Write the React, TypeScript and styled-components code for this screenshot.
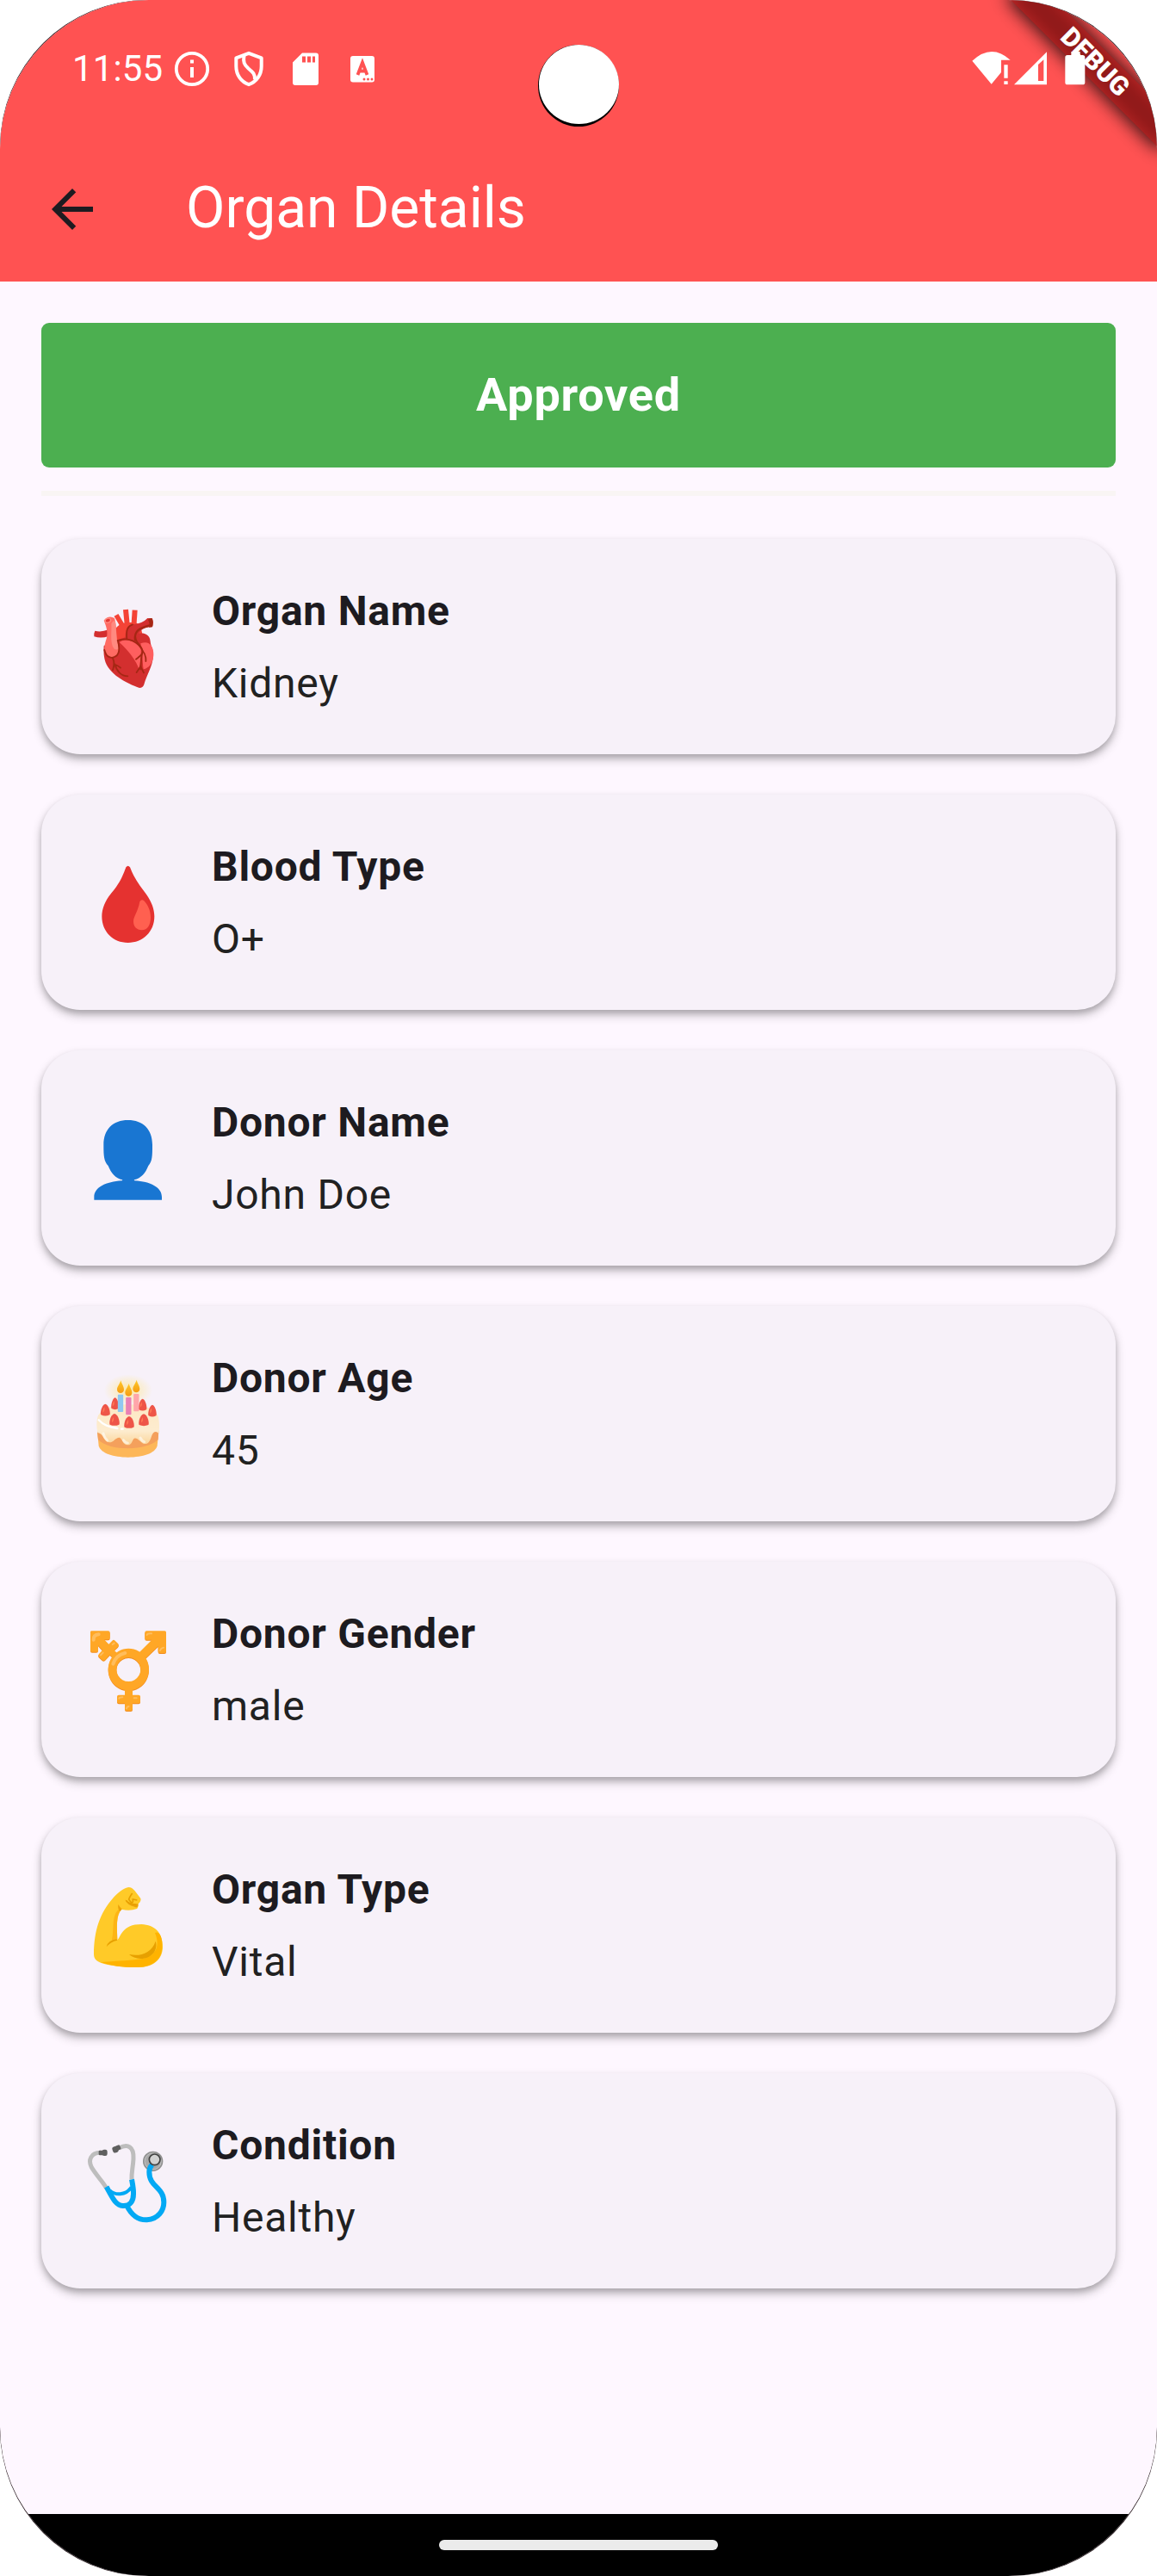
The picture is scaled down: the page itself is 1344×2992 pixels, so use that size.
import React from "react";
import styled, { createGlobalStyle } from "styled-components";

const GlobalStyle = createGlobalStyle`
  * { box-sizing: border-box; }
  body { margin: 0; background: #fff; font-family: Roboto, "Noto Sans", sans-serif; }
  svg { display: block; flex: none; }
`;

const Device = styled.div`
  width: 1344px;
  height: 2992px;
  background: #2a1c20;
  border-radius: 171px;
  overflow: hidden;
`;

const Screen = styled.div`
  position: relative;
  display: flex;
  flex-direction: column;
  width: 100%;
  height: 100%;
  background: #fef7ff;
  border-radius: 173px;
  overflow: hidden;
`;

const Header = styled.header`
  display: flex;
  flex-direction: column;
  height: 327px;
  flex: none;
  background: #ff5252;
`;

const StatusBar = styled.div`
  position: relative;
  z-index: 2;
  display: flex;
  align-items: center;
  justify-content: space-between;
  height: 159px;
  padding: 0 80.7px 0 84px;
`;

const StatusGroup = styled.div`
  display: flex;
  align-items: center;
  gap: 18px;
`;

const Clock = styled.span`
  width: 97px;
  font-size: 42px;
  line-height: 48px;
  letter-spacing: 0.1px;
  color: #fff;
  white-space: nowrap;
`;

const Camera = styled.div`
  position: absolute;
  z-index: 3;
  left: 625px;
  top: 52px;
  width: 94px;
  height: 95px;
  border-radius: 50%;
  background: #000;

  &::after {
    content: "";
    display: block;
    width: 93px;
    height: 92px;
    margin-left: 0.5px;
    border-radius: 50%;
    background: #fff;
  }
`;

const Ribbon = styled.div`
  position: absolute;
  z-index: 1;
  left: 1344px;
  top: 0;
  width: 0;
  height: 0;
  transform: rotate(45deg);
`;

const RibbonShadow = styled.div`
  position: absolute;
  left: -125px;
  top: 82px;
  width: 250px;
  height: 41px;
  background: rgba(0, 0, 0, 0.78);
  filter: blur(10px);
`;

const RibbonBand = styled.div`
  position: absolute;
  left: -120px;
  top: 84px;
  width: 240px;
  height: 36px;
  background: rgba(183, 28, 28, 0.7);
  color: #fff;
  font-size: 30.6px;
  font-weight: 900;
  line-height: 36px;
  text-align: center;
`;

const AppBar = styled.div`
  display: flex;
  align-items: center;
  gap: 96px;
  height: 168px;
  padding-left: 48px;
`;

const Title = styled.h1`
  margin: 0 0 2px;
  font-size: 66px;
  font-weight: 400;
  line-height: 84px;
  color: #fff;
`;

const Body = styled.main`
  flex: 1;
  display: flex;
  flex-direction: column;
  padding: 48px 48px 0;
`;

const StatusBanner = styled.div`
  display: flex;
  align-items: center;
  justify-content: center;
  height: 168px;
  padding-bottom: 2px;
  border-radius: 9px;
  background: #4caf50;
  color: #fff;
  font-size: 54px;
  font-weight: 700;
  letter-spacing: 0.75px;
`;

const Divider = styled.div`
  height: 6px;
  margin: 27px 0 50px;
  background: #f9f5f4;
`;

const List = styled.div`
  display: flex;
  flex-direction: column;
  gap: 47px;
`;

const Card = styled.section`
  display: flex;
  align-items: center;
  gap: 36px;
  height: 250px;
  padding-left: 32px;
  border-radius: 45px;
  background: #f7f1f9;
  box-shadow: 0 6px 12px rgba(0, 0, 0, 0.24), 0 4px 6px rgba(0, 0, 0, 0.14);
`;

const Emoji = styled.svg`
  width: 130px;
  height: 130px;
  margin-top: 8px;
`;

const Texts = styled.div`
  display: flex;
  flex-direction: column;
  gap: 12px;
  padding-top: 2px;
`;

const Label = styled.div`
  font-size: 48px;
  font-weight: 700;
  line-height: 72px;
  letter-spacing: 0.75px;
  color: #1d1b20;
`;

const Value = styled.div`
  font-size: 48px;
  line-height: 72px;
  letter-spacing: 0.75px;
  color: #212121;
`;

const NavBar = styled.footer`
  display: flex;
  align-items: center;
  justify-content: center;
  height: 72px;
  flex: none;
  background: #000;
`;

const Pill = styled.div`
  width: 324px;
  height: 12px;
  border-radius: 6px;
  background: #ebebeb;
`;

const InfoIcon = () => (
  <svg width="48" height="48" viewBox="0 0 48 48">
    <circle cx="24" cy="24" r="18.2" fill="none" stroke="#fff" strokeWidth="3.8" />
    <path d="M22 13.5h4v4h-4zM22 22h4v12h-4z" fill="#fff" />
  </svg>
);

const ShieldIcon = () => (
  <svg width="48" height="48" viewBox="0 0 48 48">
    <g fill="none" stroke="#fff" strokeWidth="4" strokeLinejoin="round">
      <path d="M24 5.8L9.3 11.4V21C9.3 31 15 39 24 42.2C33 39 38.7 31 38.7 21V11.4Z" />
      <path d="M18.5 8.5C17.3 16 18.500 19 23.500 23.500C29 28 31.500 30.500 31 36.500" />
    </g>
  </svg>
);

const SdIcon = () => (
  <svg width="48" height="48" viewBox="0 0 48 48">
    <path
      fillRule="evenodd"
      fill="#fff"
      d="M20 5.500H36Q39 5.500 39 8.500V40Q39 43 36 43H12Q9 43 9 40V16.500ZM20 9.500V16.500H24V9.500ZM26 9.500V16.500H30V9.500ZM32 9.500V16.500H35V9.500Z"
    />
  </svg>
);

const TypeIcon = () => (
  <svg width="48" height="48" viewBox="0 0 48 48">
    <rect x="10" y="9" width="28" height="30.500" rx="3" fill="#fff" />
    <path d="M18.500 31L24 16.500L29.500 31M20.500 26.500H27.500" fill="none" stroke="#ff5252" strokeWidth="3.800" />
    <g fill="#ff5252">
      <circle cx="26" cy="36" r="1.500" />
      <circle cx="30.500" cy="36" r="1.500" />
      <circle cx="35" cy="36" r="1.500" />
    </g>
  </svg>
);

const SystemIcons = () => (
  <svg width="136.670" height="43.330" viewBox="80 172 410 130" fill="#fff">
    <path d="M87 210Q154 147 220 207H188V250L154 291Z" />
    <path d="M198 224h13v46h-13zM198 281h13v11h-13z" />
    <path fillRule="evenodd" d="M347 179V293H233ZM336 206L317 223V280H336Z" />
    <path d="M432 178H463V190H472Q480 190 480 198V285Q480 293 472 293H419Q411 293 411 285V198Q411 190 419 190H432Z" />
  </svg>
);

const BackIcon = () => (
  <svg width="72" height="72" viewBox="0 0 24 24" fill="#1d1b20">
    <path d="M20 11H7.830l5.590-5.590L12 4l-8 8 8 8 1.410-1.410L7.830 13H20v-2z" />
  </svg>
);

const Heart = () => (
  <Emoji viewBox="0 0 390 390">
    <path d="M91 128Q112 134 138 124V147Q112 156 88 148Q86 138 91 128Z" fill="#d32f2f" />
    <g stroke="#f44336" strokeLinecap="butt" fill="none">
      <path d="M165 73L188 112" strokeWidth="17" />
      <path d="M198 54L204 115" strokeWidth="18" />
      <path d="M230 56L226 115" strokeWidth="18" />
    </g>
    <path d="M163 165V120C180 98 205 98 225 100Q250 98 256 140L200 172Z" fill="#f44336" />
    <path
      d="M122 180C118 240 135 257 165 285C195 307 225 320 246 327Q258 327 262 315C272 278 294 250 294 210C294 190 285 182 284 165C282 140 262 134 240 138L172 158Z"
      fill="#d32f2f"
    />
    <path d="M197 162C195 122 205 103 230 105Q258 101 274 84L291 85Q296 99 291 114Q262 116 252 126Q235 142 240 170Z" fill="#d32f2f" />
    <path d="M276 90Q281 82 290 85Q296 99 291 115L279 116Q284 104 276 90Z" fill="#a52714" />
    <path d="M176 168C200 150 236 166 251 192C252 222 248 245 244 262C235 232 210 200 176 168Z" fill="#ff5f5f" />
    <path d="M250 172C280 160 296 182 295 212C293 240 280 258 260 262C256 240 258 205 250 172Z" fill="#ff5f5f" />
    <path d="M122 92Q138 72 159 84C168 112 163 150 173 182C178 212 162 222 148 220C124 217 120 190 128 165C138 140 133 118 122 92Z" fill="#ff6b63" />
    <path d="M148 103Q157 88 162 96C166 125 164 152 173 188Q170 197 158 191C142 172 150 135 148 103Z" fill="#ff8a80" />
    <ellipse cx="136" cy="92" rx="10" ry="7" fill="#e53935" stroke="#ff8a80" strokeWidth="4" transform="rotate(-20 136 92)" />
    <g fill="none" stroke="#a52714" strokeWidth="5.500" strokeLinecap="round">
      <path d="M202 156C199 125 204 112 222 106" />
      <path d="M231 160C227 128 245 118 286 108" strokeWidth="7" />
      <path d="M170 162C205 148 243 165 257 198C250 225 252 240 250 262" />
      <path d="M232 150C232 170 251 175 257 198C268 210 269 222 268 234" />
      <path d="M255 208Q247 218 234 227M250 252L236 273M251 254L261 274" />
      <path d="M124 195C130 222 150 226 163 217C178 208 178 190 171 162" />
      <path d="M153 224C161 240 157 252 153 265M160 244C166 268 182 286 205 286M162 246Q173 250 180 257" />
    </g>
  </Emoji>
);

const Drop = () => (
  <Emoji viewBox="0 6 390 390">
    <path d="M199 67Q206 57 213 67C228 108 252 137 270 161C288 187 298 212 298 238C298 292 258 330 206 330C154 330 115 292 115 238C115 212 126 184 147 158C170 132 184 108 199 67Z" fill="#e53230" />
    <path d="M247 187Q253 177 262 184C276 199 285 219 285 241C285 269 274 286 254 286C236 286 225 273 225 256C225 238 240 225 247 187Z" fill="#ff6050" />
  </Emoji>
);

const Person = () => (
  <Emoji viewBox="0 897 390 390">
    <path
      d="M206 948C154 948 121 980 121 1034C121 1074 122 1090 137 1107C147 1133 163 1151 186 1156C188 1158 186 1159 184 1159C130 1163 88 1182 88 1216V1226H324V1216C324 1182 284 1162 229 1159Q226 1158 228 1156C252 1150 267 1133 277 1107C291 1090 291 1074 291 1034C291 980 258 948 206 948Z"
      fill="#1976d2"
    />
  </Emoji>
);

const berries = [
  [127, 143, 17], [161, 121, 14], [257, 125, 15], [291, 146, 15],
  [159, 177, 18], [210, 186, 18], [261, 178, 18],
];
const candles = [
  [180, "#90c8f0", 89, 62], [208, "#ea80b4", 99, 73], [235, "#ffa6aa", 87, 60],
] as const;

const Cake = () => (
  <Emoji viewBox="0 -27 390 390">
    <defs>
      <radialGradient id="glow">
        <stop offset="0" stopColor="#ffe57f" stopOpacity="0.700" />
        <stop offset="1" stopColor="#ffe57f" stopOpacity="0" />
      </radialGradient>
      <linearGradient id="cream" x1="0" y1="0" x2="0" y2="1">
        <stop offset="0" stopColor="#fde8c4" />
        <stop offset="0.650" stopColor="#fdeccf" />
        <stop offset="1" stopColor="#fbd598" />
      </linearGradient>
      <linearGradient id="flame" x1="0" y1="0" x2="0" y2="1">
        <stop offset="0" stopColor="#ffca28" />
        <stop offset="1" stopColor="#f59b14" />
      </linearGradient>
    </defs>
    <ellipse cx="207" cy="75" rx="84" ry="56" fill="url(#glow)" />
    <path d="M99 215L104 268C112 295 156 308 206 308C258 308 300 295 308 268L313 215Z" fill="#fdb759" />
    <path d="M99 220L102 247C125 268 163 277 206 277C252 277 289 266 311 247L313 215Z" fill="#f4a05c" />
    <path
      d="M100 168C112 137 155 124 206 124C262 124 303 139 312 168C316 190 316 210 313 225C305 214 293 218 288 235C281 259 272 264 259 260C243 249 238 239 228 242C221 244 221 267 204 265C187 263 188 246 177 239C162 238 157 256 141 256C120 255 122 224 100 222C96 202 96 184 100 168Z"
      fill="url(#cream)"
    />
    <g fill="none" stroke="#fff" strokeLinecap="round">
      <path d="M104 178C120 196 144 204 169 207M183 209h5" strokeWidth="7" />
      <path d="M120 225Q123 239 134 249M190 248Q197 258 205 258M249 240Q255 252 263 254" strokeWidth="9" strokeOpacity="0.550" />
    </g>
    {berries.map(([x, y, r]) => (
      <g key={x}>
        <path
          d={`M${x} ${y - 21}C${x + r - 3} ${y - 19} ${x + r + 2} ${y + 15} ${x + r - 2} ${y + 17}Q${x} ${y + 24} ${x - r + 2} ${y + 17}C${x - r - 2} ${y + 15} ${x - r + 3} ${y - 19} ${x} ${y - 21}Z`}
          fill="#ee5548"
        />
        <path d={`M${x - 3} ${y - 10}Q${x - 11} ${y} ${x - 9} ${y + 9}Q${x - 1} ${y + 6} ${x - 3} ${y - 10}Z`} fill="#ff7a55" />
      </g>
    ))}
    {candles.map(([x, color, top, flame]) => (
      <g key={x}>
        <rect x={x - 9.500} y={top} width="19" height="61" rx="3" fill={color} />
        <path d={`M${x + 1} ${flame - 22}C${x + 4} ${flame - 9} ${x + 12} ${flame - 1} ${x + 12} ${flame + 10}C${x + 12} ${flame + 26} ${x - 12} ${flame + 26} ${x - 12} ${flame + 10}C${x - 12} ${flame - 1} ${x - 3} ${flame - 8} ${x + 1} ${flame - 22}Z`} fill="url(#flame)" />
      </g>
    ))}
  </Emoji>
);

const GenderShape = () => (
  <>
    <path d="M79 45H137Q143 45 143 51V69Q143 75 137 75H123L139 91L151 79Q156 74 161 79L172 90Q176 95 171 100L158 112L172 126L156 140L143 128L126 146Q121 151 116 146L104 135Q100 130 105 125L117 112L102 96V112Q102 118 96 118H81Q75 118 75 112V49Q75 45 79 45Z" />
    <path d="M271 45H334Q339 45 339 50V116Q339 122 333 122H317Q311 122 311 116V98L268 139L246 119L289 76H271Q265 76 265 70V51Q265 45 271 45Z" />
    <path d="M195 240H222V268H243Q249 268 249 274V291Q249 297 243 297H222V317Q222 323 216 323H201Q195 323 195 317V297H174Q168 297 168 291V274Q168 268 174 268H195Z" />
    <path fillRule="evenodd" d="M208 106A71 73 0 1 0 208.100 106ZM208 137A42 42 0 1 1 207.900 137Z" />
  </>
);

const Gender = () => (
  <Emoji viewBox="0 -6 390 390">
    <g fill="#f28c1e" transform="translate(0 1)"><GenderShape /></g>
    <g fill="#ffa726" transform="translate(0 -2)"><GenderShape /></g>
    <g fill="none" stroke="#ffbd5c" strokeLinecap="round">
      <path d="M154 158Q163 128 196 120" strokeWidth="12" />
      <path d="M86 74Q85 57 104 55" strokeWidth="12" />
      <path d="M111 127L119 119M152 90L158 86M272 57Q274 51 288 52M318 111Q320 104 330 101M175 278Q177 274 187 274M201 313Q202 307 209 306M227 277h9" strokeWidth="6" />
    </g>
  </Emoji>
);

const Arm = () => (
  <Emoji viewBox="0 15 390 390">
    <path
      d="M87 298C88 218 106 157 158 99C177 81 192 68 208 66Q220 66 230 79L250 105Q253 114 242 124Q242 138 237 141Q212 150 184 143C163 162 168 207 169 250C182 238 185 195 253 195C299 197 327 223 327 275C326 320 291 345 240 345C197 346 149 341 113 330C94 323 87 315 87 298Z"
      fill="#ffca28"
    />
    <path d="M300 225Q312 220 320 236C329 259 328 299 309 319C291 338 267 345 240 345C197 346 149 341 111 327C177 321 219 322 260 314C298 306 321 275 300 225Z" fill="#ffb300" />
    <path d="M184 143C163 162 168 207 169 248L150 249C158 218 148 164 173 144Z" fill="#fdb515" />
    <path d="M212 300C247 308 289 296 302 254C312 282 290 315 250 315Q225 314 210 300Z" fill="#e7a000" />
    <path d="M131 274Q136 251 166 247L169 251Q145 256 131 274Z" fill="#e7a000" />
    <path d="M172 126Q178 136 185 142L178 150Q170 143 172 126ZM196 109Q208 125 241 124V131Q238 139 229 134Q203 129 196 109Z" fill="#eba10a" />
    <path d="M221 87Q210 102 209 109Q220 125 223 117L223 108L238 111" fill="none" stroke="#e7a000" strokeWidth="5" />
    <path d="M199 112Q211 127 233 126" fill="none" stroke="#e7a000" strokeWidth="5" />
  </Emoji>
);

const Stethoscope = () => (
  <Emoji viewBox="0 6 390 390">
    <g fill="none" strokeWidth="15">
      <path d="M111 91C77 90 66 117 79 142C94 168 116 189 130 213" stroke="#bdbdbd" />
      <path d="M175 75C205 59 227 69 225 112C223 145 218 158 219 184" stroke="#bdbdbd" />
      <circle cx="293" cy="121" r="35" fill="#8f8f8f" stroke="none" />
      <circle cx="293" cy="121" r="29" fill="#a9a9a9" stroke="#c4c4c4" strokeWidth="3" />
      <path d="M131 210C151 246 162 274 188 276C215 278 225 258 225 235C226 219 223 205 219 184" stroke="#03a9f4" strokeWidth="18" />
      <path d="M143 223C160 239 197 242 218 211" stroke="#03a9f4" strokeWidth="12" />
      <path d="M202 276C221 314 247 326 272 325C312 322 331 292 331 264C331 209 280 212 280 158Q280 144 290 133" stroke="#03a9f4" strokeWidth="18" />
    </g>
    <circle cx="299" cy="115" r="19" fill="#d1d1d1" stroke="#424242" strokeWidth="5" />
    <g fill="#5f5f5f">
      <rect x="104" y="83" width="17" height="17" rx="4" />
      <rect x="116" y="80" width="18" height="22" rx="7" />
      <rect x="165" y="65" width="15" height="17" rx="4" transform="rotate(-25 172 74)" />
      <rect x="152" y="69" width="20" height="22" rx="8" transform="rotate(-20 162 80)" />
    </g>
  </Emoji>
);

const details = [
  { label: "Organ Name", value: "Kidney", Icon: Heart },
  { label: "Blood Type", value: "O+", Icon: Drop },
  { label: "Donor Name", value: "John Doe", Icon: Person },
  { label: "Donor Age", value: "45", Icon: Cake },
  { label: "Donor Gender", value: "male", Icon: Gender },
  { label: "Organ Type", value: "Vital", Icon: Arm },
  { label: "Condition", value: "Healthy", Icon: Stethoscope },
];

export default function App() {
  return (
    <Device>
      <GlobalStyle />
      <Screen>
        <Header>
          <StatusBar>
            <StatusGroup>
              <Clock>11:55</Clock>
              <InfoIcon />
              <ShieldIcon />
              <SdIcon />
              <TypeIcon />
            </StatusGroup>
            <SystemIcons />
          </StatusBar>
          <AppBar>
            <BackIcon />
            <Title>Organ Details</Title>
          </AppBar>
        </Header>
        <Body>
          <StatusBanner>Approved</StatusBanner>
          <Divider />
          <List>
            {details.map(({ label, value, Icon }) => (
              <Card key={label}>
                <Icon />
                <Texts>
                  <Label>{label}</Label>
                  <Value>{value}</Value>
                </Texts>
              </Card>
            ))}
          </List>
        </Body>
        <NavBar>
          <Pill />
        </NavBar>
        <Camera />
        <Ribbon>
          <RibbonShadow />
          <RibbonBand>DEBUG</RibbonBand>
        </Ribbon>
      </Screen>
    </Device>
  );
}
